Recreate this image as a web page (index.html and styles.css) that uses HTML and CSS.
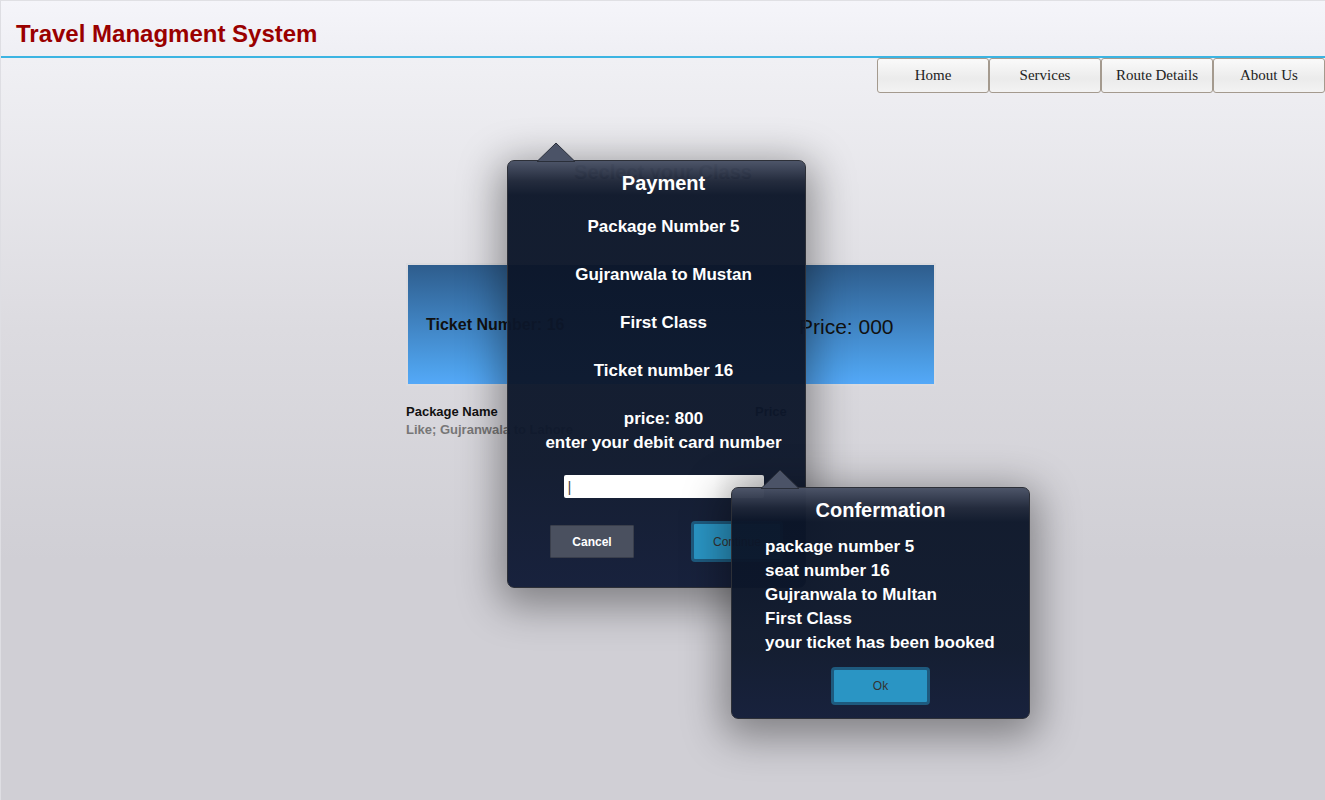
FILE: index.html
```html
<!DOCTYPE html>
<html>
<head>
<meta charset="utf-8">
<title>Travel Managment System</title>
<link rel="stylesheet" href="styles.css">
</head>
<body>
<div class="page">
  <header class="topbar">
    <h1 class="brand">Travel Managment System</h1>
  </header>
  <nav class="nav">
    <a class="nav-btn">Home</a>
    <a class="nav-btn">Services</a>
    <a class="nav-btn">Route Details</a>
    <a class="nav-btn">About Us</a>
  </nav>
  <main class="content">
    <h2 class="section-title">Seclect your Class</h2>
    <div class="ticket-box">
      <div class="cell cell-left">Ticket Number: 16</div>
      <div class="cell cell-mid"></div>
      <div class="cell cell-right">Price: 000</div>
    </div>
    <div class="labels">
      <div class="label-col">
        <div class="label">Package Name</div>
        <div class="hint">Like; Gujranwala to Lahore</div>
      </div>
      <div class="label-col price-col">
        <div class="label">Price</div>
      </div>
    </div>
  </main>

  <div class="popup payment">
    <svg class="arrow" width="40" height="20" viewBox="0 0 40 20"><polygon points="1,19.5 20,1 39,19.5" fill="#4b5367" stroke="#2a2f3a" stroke-width="1"/></svg>
    <div class="popup-title">Payment</div>
    <p class="pline">Package Number 5</p>
    <p class="pline">Gujranwala to Mustan</p>
    <p class="pline">First Class</p>
    <p class="pline">Ticket number 16</p>
    <p class="pline last">price: 800</p>
    <div class="pline-tight">enter your debit card number</div>
    <div class="field-row"><div class="field">|</div></div>
    <div class="btn-row">
      <button class="btn btn-cancel">Cancel</button>
      <button class="btn btn-blue">Continue</button>
    </div>
  </div>

  <div class="popup confirm">
    <svg class="arrow" width="40" height="20" viewBox="0 0 40 20"><polygon points="1,19.5 20,1 39,19.5" fill="#4b5367" stroke="#2a2f3a" stroke-width="1"/></svg>
    <div class="popup-title">Confermation</div>
    <div class="clines">
      <div>package number 5</div>
      <div>seat number 16</div>
      <div>Gujranwala to Multan</div>
      <div>First Class</div>
      <div>your ticket has been booked</div>
    </div>
    <div class="ok-row"><button class="btn btn-blue btn-ok">Ok</button></div>
  </div>
</div>
</body>
</html>
```

FILE: styles.css
```css
* { box-sizing: border-box; }
html, body { margin: 0; padding: 0; }
body {
  width: 1325px;
  height: 800px;
  overflow: hidden;
  font-family: "Liberation Sans", Arial, sans-serif;
  background: linear-gradient(#f0f0f4 60px, #dcdbe0 330px, #d0cfd5 560px, #d0cfd5);
}
.page {
  position: relative;
  height: 800px;
  border-top: 1px solid #e0e0e4;
  border-left: 1px solid #dedee3;
}
.topbar {
  height: 57px;
  background: linear-gradient(#f5f5fa, #efeff4);
  border-bottom: 2px solid #3cb4e2;
  padding: 19px 0 0 15px;
}
.brand {
  margin: 0;
  font-size: 24px;
  line-height: 28px;
  font-weight: bold;
  color: #9a0000;
}
.nav {
  display: flex;
  justify-content: flex-end;
}
.nav-btn {
  display: flex;
  align-items: center;
  justify-content: center;
  height: 35px;
  width: 112px;
  font-family: "Liberation Serif", "Times New Roman", serif;
  font-size: 15px;
  color: #222;
  background: linear-gradient(#fafafa, #ebebeb 60%, #f3f3f3);
  border: 1px solid #a49a8e;
  border-radius: 3px;
}
.content {
  width: 530px;
  margin-left: 405px;
  padding-top: 67px;
}
.section-title {
  margin: 0;
  text-align: center;
  font-size: 20px;
  line-height: 24px;
  color: #333;
  padding-right: 16px;
}
.ticket-box {
  margin-top: 79px;
  height: 123px;
  border: 2px solid #dbdbdf;
  background: linear-gradient(#2e5d8d, #4d9fe8 85%, #54a8f8);
  display: flex;
  align-items: center;
}
.cell { color: #111; }
.cell-left { width: 180px; padding-left: 18px; font-weight: bold; font-size: 16px; }
.cell-mid { flex: 1; }
.cell-right { width: 135px; font-size: 21px; padding-top: 4px; }
.labels {
  display: flex;
  padding-top: 18px;
  font-size: 13px;
  font-weight: bold;
}
.label-col { flex: none; width: 349px; }
.price-col { width: auto; }
.label { color: #111; line-height: 16px; }
.hint { color: #777; line-height: 20px; }

/* popups */
.popup {
  position: absolute;
  border: 1px solid #2d3038;
  border-radius: 7px;
  background: linear-gradient(rgba(74,82,102,0.98) 0, rgba(30,38,56,0.97) 20px, rgba(11,21,40,0.96) 34px, rgba(13,23,43,0.96) 70%, rgba(18,28,56,0.97));
  box-shadow: 0 10px 40px 8px rgba(0,0,0,0.38);
  color: #fff;
  font-weight: bold;
}
.arrow {
  position: absolute;
  top: -19px;
}
.popup-title {
  text-align: center;
  font-size: 20px;
  line-height: 24px;
  padding-top: 10px;
}
.payment {
  left: 506px;
  top: 159px;
  width: 299px;
  height: 428px;
  padding-left: 14px;
}
.payment .arrow { left: 28px; }
.pline {
  margin: 23px 0 0;
  text-align: center;
  font-size: 17px;
  line-height: 18px;
}
.pline + .pline { margin-top: 30px; }
.pline-tight {
  margin-top: 6px;
  text-align: center;
  font-size: 17px;
  line-height: 18px;
}
.field-row {
  display: flex;
  justify-content: center;
  margin-top: 23px;
}
.field {
  width: 200px;
  height: 23px;
  background: linear-gradient(90deg, #fff 75%, #dedede);
  color: #444;
  font-weight: normal;
  font-size: 15px;
  line-height: 23px;
  padding-left: 4px;
  border-radius: 2px;
}
.btn-row {
  display: flex;
  gap: 57px;
  padding: 23px 0 0 28px;
  align-items: center;
}
.btn {
  font-family: "Liberation Sans", Arial, sans-serif;
  font-size: 12px;
  font-weight: bold;
}
.btn-cancel {
  width: 84px;
  height: 33px;
  background: #4a505f;
  color: #fff;
  border: 1px solid #3a3f4c;
  border-radius: 1px;
}
.btn-blue {
  width: 92px;
  height: 41px;
  background: #2a95c4;
  color: #333;
  font-weight: normal;
  border: 3px solid #1e5a7e;
  border-radius: 4px;
}
.confirm {
  left: 730px;
  top: 486px;
  width: 299px;
  height: 232px;
}
.confirm .arrow { left: 28px; }
.popup-title + .clines { }
.clines {
  padding: 13px 0 0 33px;
  font-size: 17px;
  line-height: 24px;
}
.ok-row {
  display: flex;
  justify-content: center;
  padding: 12px 0 0 0;
}
.btn-ok {
  width: 99px;
  height: 38px;
}
```
